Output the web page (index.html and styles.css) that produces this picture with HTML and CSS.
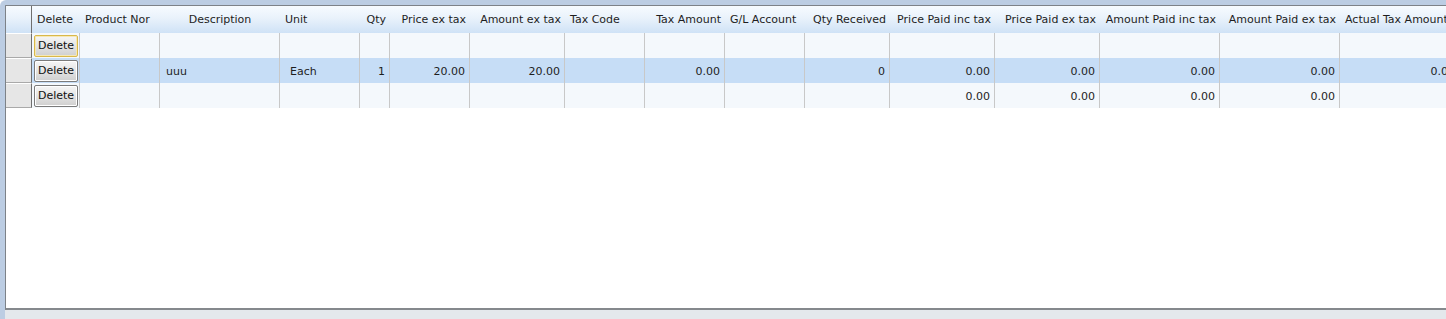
FILE: index.html
```html
<!DOCTYPE html>
<html>
<head>
<meta charset="utf-8">
<link rel="stylesheet" href="styles.css">
</head>
<body>
<div class="frame">
  <div class="grid">
    <div class="row head">
      <div class="cell sel"></div>
      <div class="cell l">Delete</div>
      <div class="cell l">Product Nor</div>
      <div class="cell c">Description</div>
      <div class="cell l">Unit</div>
      <div class="cell r">Qty</div>
      <div class="cell r">Price ex tax</div>
      <div class="cell r">Amount ex tax</div>
      <div class="cell l">Tax Code</div>
      <div class="cell r">Tax Amount</div>
      <div class="cell l">G/L Account</div>
      <div class="cell r">Qty Received</div>
      <div class="cell r">Price Paid inc tax</div>
      <div class="cell r">Price Paid ex tax</div>
      <div class="cell r">Amount Paid inc tax</div>
      <div class="cell r">Amount Paid ex tax</div>
      <div class="cell l">Actual Tax Amount</div>
    </div>
    <div class="row body">
      <div class="cell sel"></div>
      <div class="cell btn-cell"><button class="del focus">Delete</button></div>
      <div class="cell"></div><div class="cell"></div><div class="cell"></div><div class="cell"></div><div class="cell"></div><div class="cell"></div><div class="cell"></div><div class="cell"></div><div class="cell"></div><div class="cell"></div><div class="cell"></div><div class="cell"></div><div class="cell"></div><div class="cell"></div><div class="cell"></div>
    </div>
    <div class="row body active">
      <div class="cell sel"></div>
      <div class="cell btn-cell"><button class="del">Delete</button></div>
      <div class="cell"></div>
      <div class="cell l text">uuu</div>
      <div class="cell l unit">Each</div>
      <div class="cell r">1</div>
      <div class="cell r">20.00</div>
      <div class="cell r">20.00</div>
      <div class="cell"></div>
      <div class="cell r">0.00</div>
      <div class="cell"></div>
      <div class="cell r">0</div>
      <div class="cell r">0.00</div>
      <div class="cell r">0.00</div>
      <div class="cell r">0.00</div>
      <div class="cell r">0.00</div>
      <div class="cell r">0.00</div>
    </div>
    <div class="row body">
      <div class="cell sel"></div>
      <div class="cell btn-cell"><button class="del">Delete</button></div>
      <div class="cell"></div><div class="cell"></div><div class="cell"></div><div class="cell"></div><div class="cell"></div><div class="cell"></div><div class="cell"></div><div class="cell"></div><div class="cell"></div><div class="cell"></div>
      <div class="cell r">0.00</div>
      <div class="cell r">0.00</div>
      <div class="cell r">0.00</div>
      <div class="cell r">0.00</div>
      <div class="cell"></div>
    </div>
  </div>
  <div class="footer"></div>
</div>
</body>
</html>
```
FILE: styles.css
```css
html, body {
  margin: 0;
  padding: 0;
  background: #ffffff;
}
body {
  font-family: "DejaVu Sans", Tahoma, sans-serif;
  font-size: 11px;
  color: #1e1e1e;
  width: 1446px;
  height: 319px;
  overflow: hidden;
}
.frame {
  width: 1446px;
  height: 319px;
  box-sizing: border-box;
  border-top: 5px solid #bccde3;
  border-left: 5px solid #bccde3;
  border-top-left-radius: 6px;
  display: flex;
  flex-direction: column;
  overflow: hidden;
  background: #e4e8ec;
}
.grid {
  height: 305px;
  flex: none;
  box-sizing: border-box;
  border-top: 1px solid #7d8288;
  border-left: 1px solid #7d8288;
  border-bottom: 2px solid #85898d;
  background: #ffffff;
  overflow: hidden;
}
.footer {
  flex: 1;
  background: #e4e8ec;
}
.row {
  display: grid;
  grid-template-columns: 26px 48px 80px 120px 80px 30px 80px 95px 80px 80px 80px 85px 105px 105px 120px 120px 120px;
  width: 1474px;
}
.cell {
  box-sizing: border-box;
  white-space: nowrap;
  overflow: hidden;
  padding: 0 4px;
  display: flex;
  align-items: center;
}
.l { justify-content: flex-start; }
.c { justify-content: center; }
.r { justify-content: flex-end; }

.head {
  height: 27px;
  background: linear-gradient(to bottom, #f7fbff 0%, #e9f2fb 45%, #cfe2f6 100%);
}
.head .cell { padding-top: 0; }
.head .cell.l { padding-left: 5px; }
.head .cell.sel { border-right: 1px solid #6f6f6f; }

.body {
  height: 25px;
}
.body .cell {
  background: #f4f8fc;
  border-right: 1px solid #c8c8c8;
  padding-top: 1px;
}
.body.active .cell {
  background: #c6ddf6;
}
.body .cell.sel,
.body.active .cell.sel {
  background: #e6e6e6;
  border-top: 1px solid #ffffff;
  border-bottom: 1px solid #a9a9a9;
  border-right: 1px solid #6f6f6f;
  padding-top: 0;
}
.body .cell.text { padding-left: 6px; }
.body .cell.unit { padding-left: 10px; }
.body .cell.btn-cell {
  padding: 0 0 0 2px;
}
.del {
  display: block;
  width: 44px;
  height: 22px;
  margin: 0;
  padding: 0;
  font-family: "DejaVu Sans", Tahoma, sans-serif;
  font-size: 11px;
  color: #111;
  border: 1px solid #7b7b7b;
  border-radius: 2px;
  background: linear-gradient(to bottom, #f6f6f6 0%, #e4e4e4 50%, #cfcfcf 100%);
  box-shadow: inset 0 0 0 1px #ffffff;
}
.del.focus {
  border-color: #d9b84a;
  box-shadow: inset 0 0 0 1px #f6e8b4;
}
```
